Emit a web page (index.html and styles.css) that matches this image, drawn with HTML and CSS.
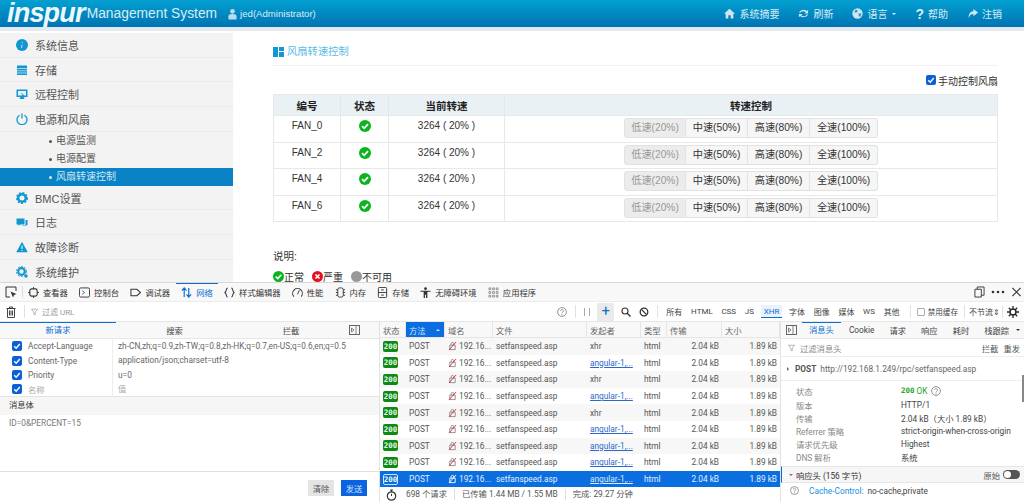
FILE: index.html
```html
<!DOCTYPE html>
<html lang="zh-CN">
<head>
    <meta charset="UTF-8">
    <meta name="viewport" content="width=device-width, initial-scale=1.0">
    <title>Management System</title>
    <link rel="stylesheet" href="styles.css">
</head>
<body>
    <svg class="defs" aria-hidden="true">
        <symbol id="ok" viewBox="0 0 12 12"><circle cx="6" cy="6" r="6" fill="#0ab41e"/><path d="M3 6.2 5.2 8.3 9 4.2" fill="none" stroke="#fff" stroke-width="1.8"/></symbol>
        <symbol id="bad" viewBox="0 0 12 12"><circle cx="6" cy="6" r="6" fill="#e8101c"/><path d="M3.800 3.800l4.400 4.400M8.200 3.800 3.800 8.200" fill="none" stroke="#fff" stroke-width="1.800"/></symbol>
        <symbol id="na" viewBox="0 0 12 12"><circle cx="6" cy="6" r="6" fill="#999"/></symbol>
        <symbol id="tick" viewBox="0 0 10 10"><rect width="10" height="10" rx="2" fill="#0b5fd8"/><path d="M2.2 5.2 4.2 7.2 7.8 3" fill="none" stroke="#fff" stroke-width="1.4"/></symbol>
        <symbol id="lock" viewBox="0 0 10 10"><path d="M2 4h6v5H2z" fill="none" stroke="#888"/><path d="M3.5 4V2.5a1.5 1.5 0 0 1 3 0V4" fill="none" stroke="#888"/><path d="M1 9.5 9 .5" stroke="#e0202a" stroke-width="1"/></symbol>
        <symbol id="lockw" viewBox="0 0 10 10"><path d="M2 4h6v5H2z" fill="none" stroke="#fff"/><path d="M3.5 4V2.5a1.5 1.5 0 0 1 3 0V4" fill="none" stroke="#fff"/><path d="M1 9.5 9 .5" stroke="#fff" stroke-width="1"/></symbol>
        <symbol id="funnel" viewBox="0 0 8 8"><path d="M.5.8h7L4.8 4v3.2L3.2 6.4V4z" fill="none" stroke="#999" stroke-width=".8"/></symbol>
        <symbol id="help" viewBox="0 0 10 10"><circle cx="5" cy="5" r="4.4" fill="none" stroke="#777" stroke-width=".8"/><path d="M3.6 3.9a1.4 1.4 0 1 1 2.2 1.2C5.2 5.5 5 5.8 5 6.4M5 7.2v.9" fill="none" stroke="#777" stroke-width=".8"/></symbol>
        <symbol id="panel" viewBox="0 0 11 10"><rect x=".5" y=".5" width="10" height="9" fill="none" stroke="#666"/><path d="M7 .5v9M2.5 3 5 5 2.5 7z" fill="none" stroke="#666" stroke-width=".8"/></symbol>
    </svg>

    <header class="topbar">
        <span class="logo">inspur</span>
        <span class="product">Management System</span>
        <span class="user">
            <svg class="user-icon" viewBox="0 0 10 12"><circle cx="5" cy="3" r="2.6" fill="#bcdcec"/><path d="M.5 12V8.5C.5 6.8 2 6 5 6s4.5.8 4.5 2.5V12z" fill="#bcdcec"/></svg>
            jed(Administrator)
        </span>
        <nav class="topnav">
            <a class="nav-summary"><svg viewBox="0 0 12 12"><path d="M6 .8 12 6.4h-1.8V11.5H7.3V8H4.7v3.5H1.8V6.4H0z" fill="#cfe6f2"/></svg>系统摘要</a>
            <a class="nav-refresh"><svg viewBox="0 0 12 12"><path d="M1 5a5 4 0 0 1 8.6-1.6L11 2v4H7l1.4-1.4A3.5 3 0 0 0 2.6 5zM11 7a5 4 0 0 1-8.6 1.6L1 10V6.5h4L3.6 8a3.5 3 0 0 0 5.8-1z" fill="#cfe6f2"/></svg>刷新</a>
            <a class="nav-lang"><svg viewBox="0 0 12 12"><circle cx="6" cy="6" r="5.6" fill="#cfe6f2"/><path d="M4 1.5 6.5 3 5 5 2.500 5zM7 6h3.500L9 9.500 7.500 9z" fill="#2f93c4"/></svg>语言<i class="caret"></i></a>
            <a class="nav-help"><span class="qmark">?</span>帮助</a>
            <a class="nav-out"><svg viewBox="0 0 12 12"><path d="M7 1 12 5 7 9V6.500C4.500 6.500 3 7.500 2 11 1.500 6.500 3.500 3.600 7 3.500z" fill="#cfe6f2"/></svg>注销</a>
        </nav>
    </header>
    <div class="topline"></div>

    <div class="app">
        <aside class="sidebar">
            <div class="menu-item"><svg viewBox="0 0 12 12"><circle cx="6" cy="6" r="6" fill="#1296d2"/><path d="M6.300 3v1M6 5.500 5.600 9" stroke="#bfe3f3" stroke-width="1"/></svg>系统信息</div>
            <div class="menu-item"><svg viewBox="0 0 12 12"><path d="M1 1.500h10V11H1z" fill="#1296d2"/><path d="M1 4.500h10M1 6.800h10M1 9h10" stroke="#cbe8f5" stroke-width=".8"/></svg>存储</div>
            <div class="menu-item"><svg viewBox="0 0 12 12"><path d="M.5 1.500h11V9h-4l1 2H3.500l1-2h-4z" fill="#1296d2"/><path d="M2 3h8v4.500H2z" fill="#dff1f9"/><path d="M5 4.500 9.500 9 7 9.500z" fill="#1296d2"/></svg>远程控制</div>
            <div class="menu-item"><svg viewBox="0 0 12 12"><path d="M6 .5v5" stroke="#1296d2" stroke-width="1.300"/><path d="M3.600 2.300a5 5 0 1 0 4.800 0" fill="none" stroke="#1296d2" stroke-width="1.300"/></svg>电源和风扇</div>
            <div class="menu-sub">电源监测</div>
            <div class="menu-sub">电源配置</div>
            <div class="menu-sub is-active">风扇转速控制</div>
            <div class="menu-item"><svg viewBox="0 0 12 12"><circle cx="6" cy="6" r="3.800" fill="none" stroke="#1296d2" stroke-width="2.600"/><circle cx="6" cy="6" r="5.400" fill="none" stroke="#1296d2" stroke-width="1.200" stroke-dasharray="2 1.600"/></svg>BMC设置</div>
            <div class="menu-item"><svg viewBox="0 0 12 12"><path d="M.5 2.500h8v6H4L2.500 10V8.500h-2zM9.500 4h2v5h-1v1.300L9 9H6.500V9.500H9.500z" fill="#1296d2"/></svg>日志</div>
            <div class="menu-item"><svg viewBox="0 0 12 12"><path d="M6 .8 11.800 11.200H.2z" fill="#1296d2"/><path d="M6 4.500V8M6 9v1" stroke="#fff" stroke-width="1"/></svg>故障诊断</div>
            <div class="menu-item"><svg viewBox="0 0 12 12"><circle cx="5.500" cy="5.500" r="3.300" fill="none" stroke="#1296d2" stroke-width="2.200"/><circle cx="5.500" cy="5.500" r="5" fill="none" stroke="#1296d2" stroke-width="1" stroke-dasharray="1.800 1.400"/><circle cx="10" cy="10" r="1.700" fill="#1296d2"/></svg>系统维护</div>
        </aside>

        <main class="content">
            <h2 class="page-title">
                <svg viewBox="0 0 11 10"><path d="M0 0h5v10H0zM6 0h5v4H6zM6 5h5v5H6z" fill="#1296d2"/></svg>
                风扇转速控制
            </h2>
            <label class="manual"><svg><use href="#tick"/></svg>手动控制风扇</label>
            <table class="fans">
                <thead>
                    <tr><th class="c-id">编号</th><th class="c-state">状态</th><th class="c-speed">当前转速</th><th>转速控制</th></tr>
                </thead>
                <tbody>
                    <tr>
                        <td>FAN_0</td><td><svg class="state"><use href="#ok"/></svg></td><td>3264 ( 20% )</td>
                        <td><div class="btn-group"><button class="off">低速(20%)</button><button>中速(50%)</button><button>高速(80%)</button><button>全速(100%)</button></div></td>
                    </tr>
                    <tr>
                        <td>FAN_2</td><td><svg class="state"><use href="#ok"/></svg></td><td>3264 ( 20% )</td>
                        <td><div class="btn-group"><button class="off">低速(20%)</button><button>中速(50%)</button><button>高速(80%)</button><button>全速(100%)</button></div></td>
                    </tr>
                    <tr>
                        <td>FAN_4</td><td><svg class="state"><use href="#ok"/></svg></td><td>3264 ( 20% )</td>
                        <td><div class="btn-group"><button class="off">低速(20%)</button><button>中速(50%)</button><button>高速(80%)</button><button>全速(100%)</button></div></td>
                    </tr>
                    <tr>
                        <td>FAN_6</td><td><svg class="state"><use href="#ok"/></svg></td><td>3264 ( 20% )</td>
                        <td><div class="btn-group"><button class="off">低速(20%)</button><button>中速(50%)</button><button>高速(80%)</button><button>全速(100%)</button></div></td>
                    </tr>
                </tbody>
            </table>
            <p class="note">说明:</p>
            <div class="legend">
                <span><svg><use href="#ok"/></svg>正常</span>
                <span><svg><use href="#bad"/></svg>严重</span>
                <span><svg><use href="#na"/></svg>不可用</span>
            </div>
        </main>
    </div>

    <section class="devtools">
        <div class="dt-tabs">
            <span class="dt-pick"><svg viewBox="0 0 12 12"><path d="M11 5V1H1v10h4" fill="none" stroke="#333"/><path d="M5.500 5.500 11.500 8 9 9 8 11.500z" fill="#333"/></svg></span>
            <span class="dt-tab"><svg viewBox="0 0 12 12"><rect x="2" y="2" width="8" height="8" rx="2" fill="none" stroke="#333" stroke-width="1.200"/><path d="M6 0v2M6 10v2M0 6h2M10 6h2" stroke="#333"/></svg>查看器</span>
            <span class="dt-tab"><svg viewBox="0 0 12 12"><rect x=".5" y="1" width="11" height="10" rx="1.500" fill="none" stroke="#333"/><path d="M3.500 4 6 6 3.500 8" fill="none" stroke="#333" stroke-width=".8"/></svg>控制台</span>
            <span class="dt-tab"><svg viewBox="0 0 12 12"><path d="M1 2.500h6.500L11.500 6l-4 3.500H1z" fill="none" stroke="#333" stroke-width="1.100"/></svg>调试器</span>
            <span class="dt-tab is-active"><svg viewBox="0 0 12 12"><path d="M3.500 11V1.500M1 4l2.500-3L6 4M8.500 1v9.500M6 8l2.500 3L11 8" fill="none" stroke="#0a6ed1" stroke-width="1.300"/></svg>网络</span>
            <span class="dt-tab"><svg viewBox="0 0 12 12"><path d="M4 1C2 1 3 5 1 6c2 1 1 5 3 5M8 1c2 0 1 4 3 5-2 1-1 5-3 5" fill="none" stroke="#333" stroke-width="1.100"/></svg>样式编辑器</span>
            <span class="dt-tab"><svg viewBox="0 0 12 12"><path d="M2 10.500A5.300 5.300 0 1 1 10 10.500" fill="none" stroke="#333" stroke-width="1.100"/><path d="M6 8 8 3.500" stroke="#333"/></svg>性能</span>
            <span class="dt-tab"><svg viewBox="0 0 12 12"><rect x="3" y="1" width="6" height="10" rx="2" fill="none" stroke="#333"/><path d="M1 3h2M1 6h2M1 9h2M9 3h2M9 6h2M9 9h2" stroke="#333"/></svg>内存</span>
            <span class="dt-tab"><svg viewBox="0 0 12 12"><rect x="1.500" y=".5" width="9" height="11" rx="1" fill="none" stroke="#333"/><path d="M1.500 6h9M4.500 3.200h3M4.500 8.800h3" stroke="#333"/></svg>存储</span>
            <span class="dt-tab"><svg viewBox="0 0 12 12"><circle cx="6" cy="1.800" r="1.500" fill="#333"/><path d="M.5 4h11v1.300H8V12H6.600V8.500H5.400V12H4V5.300H.5z" fill="#333"/></svg>无障碍环境</span>
            <span class="dt-tab"><svg viewBox="0 0 12 12"><path d="M1 1h2v2H1zM5 1h2v2H5zM9 1h2v2H9zM1 5h2v2H1zM5 5h2v2H5zM9 5h2v2H9zM1 9h2v2H1zM5 9h2v2H5zM9 9h2v2H9z" fill="none" stroke="#555" stroke-width=".6"/></svg>应用程序</span>
            <span class="dt-win">
                <svg viewBox="0 0 12 12"><path d="M1 3h7v8.500H1zM3.500 3V.5H11v9H8" fill="none" stroke="#333"/></svg>
                <svg class="wide" viewBox="0 0 14 12"><circle cx="2" cy="6" r="1.300" fill="#333"/><circle cx="7" cy="6" r="1.300" fill="#333"/><circle cx="12" cy="6" r="1.300" fill="#333"/></svg>
                <svg viewBox="0 0 12 12"><path d="M1.500 1.500l9 9M10.500 1.500l-9 9" stroke="#333" stroke-width="1.200"/></svg>
            </span>
        </div>

        <div class="dt-filter">
            <svg class="trash" viewBox="0 0 10 12"><path d="M.5 2.500h9M3.500 2.500V1h3v1.500M1.500 2.500h7V11.500h-7zM3.500 4.500v5M5 4.500v5M6.500 4.500v5" fill="none" stroke="#333" stroke-width=".9"/></svg>
            <span class="sep"></span>
            <svg class="funnel"><use href="#funnel"/></svg>
            <span class="filter-url">过滤 URL</span>
            <svg class="tool"><use href="#help"/></svg>
            <span class="sep"></span>
            <i class="pause"></i>
            <span class="plus">+</span>
            <svg class="tool" viewBox="0 0 10 10"><circle cx="4" cy="4" r="3" fill="none" stroke="#333" stroke-width="1.100"/><path d="M6.200 6.200 9.500 9.500" stroke="#333" stroke-width="1.300"/></svg>
            <svg class="tool" viewBox="0 0 10 10"><circle cx="5" cy="5" r="3.800" fill="none" stroke="#333" stroke-width="1.300"/><path d="M2.400 2.400l5.200 5.200" stroke="#333" stroke-width="1.300"/></svg>
            <span class="sep"></span>
            <span class="type-list">
                <span>所有</span><span>HTML</span><span>CSS</span><span>JS</span><span class="on">XHR</span><span>字体</span><span>图像</span><span>媒体</span><span>WS</span><span>其他</span>
            </span>
            <span class="sep sep-cache"></span>
            <span class="no-cache"><i class="box"></i>禁用缓存</span>
            <span class="sep"></span>
            <span class="throttle">不节流<i>⇕</i></span>
            <span class="sep"></span>
            <svg class="gear" viewBox="0 0 12 12"><circle cx="6" cy="6" r="3" fill="none" stroke="#222" stroke-width="1.500"/><path d="M6 0v2.500M6 9.500V12M0 6h2.500M9.500 6H12M1.800 1.800l1.800 1.800M8.400 8.400l1.800 1.800M10.200 1.800 8.400 3.600M3.600 8.400l-1.800 1.800" stroke="#222" stroke-width="1.300"/></svg>
        </div>

        <div class="dt-body">
            <div class="request-panel">
                <div class="req-tabs">
                    <span class="is-active">新请求</span><span>搜索</span><span>拦截</span>
                    <svg class="collapse"><use href="#panel"/></svg>
                </div>
                <div class="headers">
                    <svg><use href="#tick"/></svg><span>Accept-Language</span><span>zh-CN,zh;q=0.9,zh-TW;q=0.8,zh-HK;q=0.7,en-US;q=0.6,en;q=0.5</span>
                    <svg><use href="#tick"/></svg><span>Content-Type</span><span>application/json;charset=utf-8</span>
                    <svg><use href="#tick"/></svg><span>Priority</span><span>u=0</span>
                    <svg><use href="#tick"/></svg><span class="hint">名称</span><span class="hint">值</span>
                </div>
                <div class="body-title">消息体</div>
                <div class="body-text">ID=0&amp;PERCENT=15</div>
                <div class="req-foot">
                    <button class="btn-clear">清除</button>
                    <button class="btn-send">发送</button>
                </div>
            </div>

            <div class="net-panel">
                <div class="net-row net-head">
                    <span>状态</span><span class="sorted">方法<i></i></span><span>域名</span><span>文件</span><span>发起者</span><span>类型</span><span>传输</span><span>大小</span>
                </div>
                <div class="net-row"><span><b class="code">200</b></span><span>POST</span><span><svg><use href="#lock"/></svg>192.16...</span><span>setfanspeed.asp</span><span>xhr</span><span>html</span><span class="num">2.04 kB</span><span class="num">1.89 kB</span></div>
                <div class="net-row"><span><b class="code">200</b></span><span>POST</span><span><svg><use href="#lock"/></svg>192.16...</span><span>setfanspeed.asp</span><span><a>angular-1,...</a></span><span>html</span><span class="num">2.04 kB</span><span class="num">1.89 kB</span></div>
                <div class="net-row"><span><b class="code">200</b></span><span>POST</span><span><svg><use href="#lock"/></svg>192.16...</span><span>setfanspeed.asp</span><span>xhr</span><span>html</span><span class="num">2.04 kB</span><span class="num">1.89 kB</span></div>
                <div class="net-row"><span><b class="code">200</b></span><span>POST</span><span><svg><use href="#lock"/></svg>192.16...</span><span>setfanspeed.asp</span><span><a>angular-1,...</a></span><span>html</span><span class="num">2.04 kB</span><span class="num">1.89 kB</span></div>
                <div class="net-row"><span><b class="code">200</b></span><span>POST</span><span><svg><use href="#lock"/></svg>192.16...</span><span>setfanspeed.asp</span><span>xhr</span><span>html</span><span class="num">2.04 kB</span><span class="num">1.89 kB</span></div>
                <div class="net-row"><span><b class="code">200</b></span><span>POST</span><span><svg><use href="#lock"/></svg>192.16...</span><span>setfanspeed.asp</span><span><a>angular-1,...</a></span><span>html</span><span class="num">2.04 kB</span><span class="num">1.89 kB</span></div>
                <div class="net-row"><span><b class="code">200</b></span><span>POST</span><span><svg><use href="#lock"/></svg>192.16...</span><span>setfanspeed.asp</span><span><a>angular-1,...</a></span><span>html</span><span class="num">2.04 kB</span><span class="num">1.89 kB</span></div>
                <div class="net-row"><span><b class="code">200</b></span><span>POST</span><span><svg><use href="#lock"/></svg>192.16...</span><span>setfanspeed.asp</span><span><a>angular-1,...</a></span><span>html</span><span class="num">2.04 kB</span><span class="num">1.89 kB</span></div>
                <div class="net-row selected"><span><b class="code">200</b></span><span>POST</span><span><svg><use href="#lockw"/></svg>192.16...</span><span>setfanspeed.asp</span><span><a>angular-1,...</a></span><span>html</span><span class="num">2.04 kB</span><span class="num">1.89 kB</span></div>
                <div class="net-status">
                    <svg viewBox="0 0 10 12"><circle cx="5" cy="7" r="4.200" fill="none" stroke="#333" stroke-width="1.200"/><path d="M3.500 1h3M5 1v2M5 7V4.800" stroke="#333" stroke-width="1"/></svg>
                    <span>698 个请求</span><span>已传输 1.44 MB / 1.55 MB</span><span>完成: 29.27 分钟</span>
                </div>
            </div>

            <div class="detail-panel">
                <div class="detail-tabs">
                    <svg class="collapse"><use href="#panel"/></svg>
                    <span class="is-active">消息头</span><span>Cookie</span><span>请求</span><span>响应</span><span>耗时</span><span>栈跟踪</span>
                    <i class="more"></i>
                </div>
                <div class="detail-filter">
                    <svg><use href="#funnel"/></svg>
                    <span class="grow">过滤消息头</span>
                    <span class="act">拦截</span><span class="act">重发</span>
                </div>
                <div class="post-line"><i class="arrow"></i><b>POST</b>http://192.168.1.249/rpc/setfanspeed.asp</div>
                <dl class="facts">
                    <dt>状态</dt><dd><b class="ok">200</b> <span class="ok-text">OK</span> <svg><use href="#help"/></svg></dd>
                    <dt>版本</dt><dd>HTTP/1</dd>
                    <dt>传输</dt><dd>2.04 kB（大小 1.89 kB）</dd>
                    <dt>Referrer 策略</dt><dd>strict-origin-when-cross-origin</dd>
                    <dt>请求优先级</dt><dd>Highest</dd>
                    <dt>DNS 解析</dt><dd>系统</dd>
                </dl>
                <div class="resp-head">
                    <i class="arrow-down"></i><span class="grow">响应头 (156 字节)</span>
                    <span class="raw">原始</span><i class="toggle"></i>
                </div>
                <div class="resp-line"><svg><use href="#help"/></svg><span class="key">Cache-Control:</span> no-cache,private</div>
                <span class="scroll-thumb"></span>
            </div>
        </div>
    </section>
</body>
</html>
```

FILE: styles.css
```css
* {
    box-sizing: border-box;
}
html, body {
    margin: 0;
    height: 100%;
    overflow: hidden;
}
body {
    font-family: "Liberation Sans", "Noto Sans CJK SC", sans-serif;
    font-size: 10.5px;
    color: #333;
    background: #fff;
    display: flex;
    flex-direction: column;
}
.defs {
    display: none;
}
i {
    font-style: normal;
}

/* top bar */
.topbar {
    height: 27px;
    flex: none;
    display: flex;
    align-items: center;
    padding-left: 7px;
    background: linear-gradient(#02a0d0, #0073b3);
    color: #d8edf6;
}
.logo {
    font-size: 27px;
    font-weight: bold;
    font-style: italic;
    line-height: 27px;
    color: #eef8fc;
    letter-spacing: -0.8px;
    margin-right: 2px;
}
.product {
    font-size: 13.800px;
    margin-right: 11px;
}
.user {
    display: flex;
    align-items: center;
    gap: 3px;
    font-size: 9.600px;
}
.user-icon {
    width: 9px;
    height: 12px;
}
.topnav {
    margin-left: auto;
    display: flex;
    align-items: center;
    gap: 19px;
    padding-right: 22px;
    font-size: 10px;
}
.topnav a {
    display: flex;
    align-items: center;
    gap: 4px;
}
.topnav svg {
    width: 11px;
    height: 11px;
}
.qmark {
    font-size: 14px;
    font-weight: bold;
    line-height: 14px;
}
.caret {
    width: 0;
    height: 0;
    border: 2.5px solid transparent;
    border-top-color: #d8edf6;
    border-bottom: 0;
    margin-left: 1px;
}
.topline {
    height: 4px;
    flex: none;
    background: #e4e9f0;
}

/* app body */
.app {
    height: 251px;
    flex: none;
    display: flex;
    overflow: hidden;
}
.sidebar {
    width: 233px;
    flex: none;
    margin-top: 2px;
    background: #f3f3f3;
}
.menu-item {
    height: 24.7px;
    display: flex;
    align-items: center;
    gap: 7px;
    padding-left: 16px;
    font-size: 11px;
    color: #555;
    border-bottom: 1px solid #ebebeb;
}
.menu-item svg {
    width: 12px;
    height: 12px;
}
.menu-sub {
    height: 18px;
    line-height: 18px;
    padding-left: 56px;
    font-size: 10px;
    color: #555;
    position: relative;
}
.menu-sub::before {
    content: "";
    position: absolute;
    left: 49px;
    top: 8px;
    width: 3px;
    height: 3px;
    border-radius: 50%;
    background: #555;
}
.menu-sub.is-active {
    background: #0a83c6;
    color: #cfe6f2;
}
.menu-sub.is-active::before {
    background: #dcecf5;
}
.content {
    flex: 1;
    padding: 14px 26px 0 40px;
}
.page-title {
    margin: 0;
    height: 21px;
    display: flex;
    align-items: flex-start;
    gap: 3px;
    font-size: 10.3px;
    line-height: 14px;
    font-weight: normal;
    color: #5bbce6;
    border-bottom: 1px solid #f1f1f1;
}
.page-title svg {
    width: 11px;
    height: 10px;
    margin-top: 2px;
}
.manual {
    height: 28px;
    display: flex;
    justify-content: flex-end;
    align-items: flex-start;
    gap: 2px;
    padding-top: 7px;
    font-size: 10px;
}
.manual svg {
    width: 10px;
    height: 10px;
    margin-top: 2px;
}
.fans {
    width: 100%;
    border-collapse: collapse;
    table-layout: fixed;
    text-align: center;
}
.fans th, .fans td {
    border: 1px solid #e8e8e8;
    padding: 0;
}
.fans th {
    height: 21px;
    background: #e9f1f5;
    color: #222;
    font-weight: bold;
}
.fans td {
    height: 26.500px;
    vertical-align: top;
    padding-top: 3px;
    line-height: 14px;
    font-size: 10px;
}
.fans td:last-child {
    padding-top: 2px;
}
.c-id {
    width: 67px;
}
.c-state {
    width: 48px;
}
.c-speed {
    width: 116px;
}
.state {
    width: 12px;
    height: 12px;
    display: block;
    margin: 1px auto 0;
}
.btn-group {
    display: flex;
    justify-content: center;
}
.btn-group button {
    height: 20px;
    width: 62px;
    padding: 0;
    border: 1px solid #e2e2e2;
    border-left: 0;
    background: #f6f6f6;
    font: inherit;
    font-size: 10.2px;
    color: #333;
}
.btn-group button:last-child {
    width: 68px;
    border-radius: 0 3px 3px 0;
}
.btn-group button.off {
    border-left: 1px solid #e2e2e2;
    background: #ececec;
    color: #999;
    border-radius: 3px 0 0 3px;
}
.note {
    margin: 27px 0 0;
    line-height: 14px;
    font-size: 10.5px;
}
.legend {
    display: flex;
    gap: 8px;
    margin-top: 6px;
    font-size: 10px;
}
.legend span {
    display: flex;
    align-items: center;
}
.legend svg {
    width: 11px;
    height: 11px;
}

/* devtools */
.devtools {
    flex: 1;
    min-height: 0;
    display: flex;
    flex-direction: column;
    border-top: 1px solid #d8d8d8;
    font-family: Roboto, "Noto Sans CJK SC", sans-serif;
    font-size: 8.300px;
    color: #444;
    background: #fff;
}
.dt-tabs {
    height: 19px;
    flex: none;
    display: flex;
    align-items: center;
    background: #f8f8f8;
    border-bottom: 1px solid #ececec;
    color: #333;
}
.dt-pick {
    width: 23px;
    height: 12px;
    padding-left: 5px;
    border-right: 1px solid #ddd;
    display: flex;
}
.dt-pick svg {
    width: 12px;
    height: 12px;
}
.dt-tab {
    height: 19px;
    display: flex;
    align-items: center;
    gap: 4px;
    padding: 0 5px;
    margin-right: 1.200px;
    white-space: nowrap;
}
.dt-tab svg {
    width: 11px;
    height: 11px;
}
.dt-tab.is-active {
    color: #0a6ed1;
    box-shadow: inset 0 1px 0 #0a6ed1;
}
.dt-win {
    margin-left: auto;
    display: flex;
    align-items: center;
    gap: 6px;
    padding-right: 2px;
}
.dt-win svg {
    width: 11px;
    height: 12px;
}
.dt-win svg.wide {
    width: 14px;
}
.dt-filter {
    height: 20px;
    flex: none;
    display: flex;
    align-items: center;
    gap: 8px;
    padding: 0 5px 0 6px;
    border-bottom: 1px solid #e6e6e6;
    font-size: 8px;
}
.sep {
    width: 1px;
    height: 13px;
    background: #e2e2e2;
}
.sep-cache {
    margin-left: 2px;
}
.trash {
    width: 10px;
    height: 12px;
}
.funnel {
    width: 7px;
    height: 8px;
    margin-left: -2px;
}
.filter-url {
    color: #999;
    margin: 0 auto 0 -4px;
}
.tool {
    width: 10px;
    height: 10px;
}
.pause {
    width: 6px;
    height: 8px;
    border-left: 1px solid #aaa;
    border-right: 1px solid #aaa;
}
.plus {
    width: 17px;
    height: 18px;
    margin: 0 -1px;
    background: #eaeaea;
    color: #0a6ed1;
    font-size: 15px;
    line-height: 17px;
    text-align: center;
}
.type-list {
    display: flex;
    align-items: center;
    gap: 8.700px;
}
.type-list .on {
    margin: 0 -2px;
    padding: 2px 3px 1px;
    background: #e9f1fa;
    color: #0a6ed1;
    border-bottom: 1px solid #0a6ed1;
}
.no-cache {
    display: flex;
    align-items: center;
    gap: 3px;
    margin: 0 -2px;
    font-size: 7.600px;
}
.box {
    width: 8px;
    height: 8px;
    border: 1px solid #aaa;
    border-radius: 1px;
}
.throttle {
    margin: 0 -6px 0 -4px;
}
.throttle i {
    font-size: 8px;
}
.gear {
    width: 12px;
    height: 12px;
    margin-left: -4px;
}
.dt-body {
    flex: 1;
    min-height: 0;
    display: flex;
}

/* request panel */
.request-panel {
    width: 380px;
    flex: none;
    display: flex;
    flex-direction: column;
    border-right: 1px solid #e2e2e2;
    position: relative;
}
.req-tabs {
    height: 17px;
    flex: none;
    display: grid;
    grid-template-columns: 116px 117px 116px 1fr;
    align-items: center;
    text-align: center;
    background: #f8f8f8;
    border-bottom: 1px solid #e6e6e6;
}
.req-tabs .is-active {
    height: 16px;
    line-height: 16px;
    color: #0a6ed1;
    box-shadow: inset 0 1px 0 #0a6ed1;
}
.collapse {
    width: 11px;
    height: 10px;
}
.headers {
    height: 58px;
    flex: none;
    display: grid;
    grid-template-columns: 28px 84px 1fr;
    grid-auto-rows: 14.400px;
    align-items: center;
    border-bottom: 1px solid #e4e4e4;
    color: #666;
    white-space: nowrap;
}
.headers svg {
    width: 10px;
    height: 10px;
    margin-left: 12px;
}
.headers span:nth-of-type(2n) {
    border-left: 1px solid #ededed;
    padding-left: 5px;
    height: 100%;
    line-height: 14px;
}
.hint {
    color: #aaa;
}
.body-title {
    height: 18px;
    flex: none;
    line-height: 17px;
    padding-left: 9px;
    background: #f6f6f6;
    color: #333;
}
.body-text {
    flex: 1;
    padding: 1px 0 0 9px;
    line-height: 14px;
    color: #777;
    border-bottom: 1px solid #e0e0e0;
}
.req-foot {
    height: 30px;
    flex: none;
    display: flex;
    justify-content: flex-end;
    gap: 7px;
    padding: 8px 12px 0 0;
}
.req-foot button {
    width: 26px;
    height: 16px;
    padding: 0;
    border: 0;
    font: inherit;
}
.btn-clear {
    background: #e4e4e4;
    color: #555;
}
.btn-send {
    background: #0b63e0;
    color: #cfe3fa;
}

/* network table */
.net-panel {
    width: 401px;
    flex: none;
    display: flex;
    flex-direction: column;
    border-right: 1px solid #e2e2e2;
}
.net-row {
    height: 16.600px;
    flex: none;
    display: grid;
    grid-template-columns: 26px 39px 48px 94px 54px 26px 55px 58px;
    align-items: center;
    white-space: nowrap;
    color: #555;
}
.net-row:nth-child(even) {
    background: #f7f7f7;
}
.net-row > span {
    padding-left: 3px;
    overflow: hidden;
    display: flex;
    align-items: center;
}
.net-row svg {
    width: 9px;
    height: 10px;
    margin-right: 2px;
    flex: none;
}
.net-row a {
    color: #2b68c8;
    text-decoration: underline;
}
.net-row .num {
    justify-content: flex-end;
    padding-right: 3px;
}
.net-head {
    height: 16px;
    background: #f8f8f8 !important;
    border-bottom: 1px solid #e6e6e6;
    color: #666;
}
.net-head > span {
    height: 100%;
    border-right: 1px solid #e6e6e6;
}
.net-head .sorted {
    background: #0a6ee0;
    color: #d0e4fa;
    justify-content: space-between;
    padding-right: 4px;
}
.sorted i {
    width: 0;
    height: 0;
    border: 2.500px solid transparent;
    border-bottom-color: #d0e4fa;
    border-top: 0;
}
.code {
    width: 15px;
    height: 11px;
    border-radius: 2px;
    background: #0c8a14;
    color: #e8f6e8;
    font: bold 7.500px/11px "DejaVu Sans Mono", monospace;
    text-align: center;
}
.net-row.selected {
    background: #0a6ee0;
    color: #e2eefc;
}
.selected a {
    color: #dbe9fb;
}
.selected .code {
    background: #0a6ee0;
    outline: 1px solid #cfe3fa;
    outline-offset: -1px;
}
.net-status {
    flex: 1;
    display: flex;
    align-items: center;
    padding-left: 6px;
    color: #555;
}
.net-status svg {
    width: 11px;
    height: 12px;
    margin-right: 9px;
}
.net-status span {
    padding-right: 7px;
    margin-right: 7px;
    border-right: 1px solid #ddd;
    line-height: 11px;
}
.net-status span:last-child {
    border: 0;
}

/* details panel */
.detail-panel {
    flex: 1;
    min-width: 0;
    position: relative;
    display: flex;
    flex-direction: column;
    overflow: hidden;
}
.detail-tabs {
    height: 17px;
    flex: none;
    display: flex;
    align-items: center;
    gap: 15px;
    padding-left: 5px;
    background: #f8f8f8;
    border-bottom: 1px solid #e6e6e6;
    white-space: nowrap;
}
.detail-tabs .is-active {
    margin: 0 -7px 0 -10px;
    padding: 0 7px;
    height: 16px;
    line-height: 16px;
    color: #0a6ed1;
    box-shadow: inset 0 1px 0 #0a6ed1;
}
.more {
    width: 0;
    height: 0;
    border: 2.500px solid transparent;
    border-top-color: #333;
    border-bottom: 0;
    margin-left: -8px;
}
.detail-filter {
    height: 18px;
    flex: none;
    display: flex;
    align-items: center;
    gap: 5px;
    padding: 0 4px 0 7px;
    border-bottom: 1px solid #eee;
    color: #888;
}
.detail-filter svg {
    width: 7px;
    height: 8px;
}
.grow {
    flex: 1;
}
.act {
    color: #555;
}
.post-line {
    height: 24px;
    flex: none;
    display: flex;
    align-items: center;
    padding-left: 6px;
    border-bottom: 1px solid #eee;
    color: #666;
    white-space: nowrap;
}
.post-line b {
    margin: 0 4px 0 6px;
    color: #555;
}
.arrow {
    width: 0;
    height: 0;
    border: 2.500px solid transparent;
    border-left-color: #666;
    border-right: 0;
}
.facts {
    height: 85px;
    flex: none;
    margin: 0;
    display: grid;
    grid-template-columns: 105px 1fr;
    grid-template-rows: 15px repeat(5, 13px);
    padding: 2px 0 0 15px;
    align-items: center;
    white-space: nowrap;
}
.facts dt {
    color: #888;
}
.facts dd {
    margin: 0;
    color: #444;
    display: flex;
    align-items: center;
    gap: 2px;
}
.facts svg {
    width: 10px;
    height: 10px;
    margin-left: 2px;
}
.ok {
    font: bold 7.500px "DejaVu Sans Mono", monospace;
    color: #2aa32a;
}
.ok-text {
    color: #2aa32a;
}
.resp-head {
    height: 17px;
    flex: none;
    display: flex;
    align-items: center;
    padding: 0 4px 0 7px;
    background: #f6f6f6;
    border-top: 1px solid #e6e6e6;
    border-bottom: 1px solid #e6e6e6;
    border-left: 1px solid #0a6ee0;
    color: #333;
}
.arrow-down {
    width: 0;
    height: 0;
    border: 2.500px solid transparent;
    border-top-color: #777;
    border-bottom: 0;
    margin-right: 3px;
}
.raw {
    color: #555;
    margin-right: 3px;
}
.toggle {
    width: 17px;
    height: 9px;
    border-radius: 5px;
    background: #555;
    position: relative;
}
.toggle::before {
    content: "";
    position: absolute;
    left: 1px;
    top: 1px;
    width: 7px;
    height: 7px;
    border-radius: 50%;
    background: #fff;
}
.resp-line {
    height: 13px;
    flex: none;
    margin-top: 1px;
    display: flex;
    align-items: center;
    gap: 4px;
    padding-left: 9px;
    white-space: nowrap;
    color: #444;
}
.resp-line svg {
    width: 9px;
    height: 9px;
    margin-right: 6px;
}
.key {
    color: #1a8fe0;
}
.scroll-thumb {
    position: absolute;
    right: 0;
    top: 53px;
    width: 2px;
    height: 27px;
    background: #888;
}
```
